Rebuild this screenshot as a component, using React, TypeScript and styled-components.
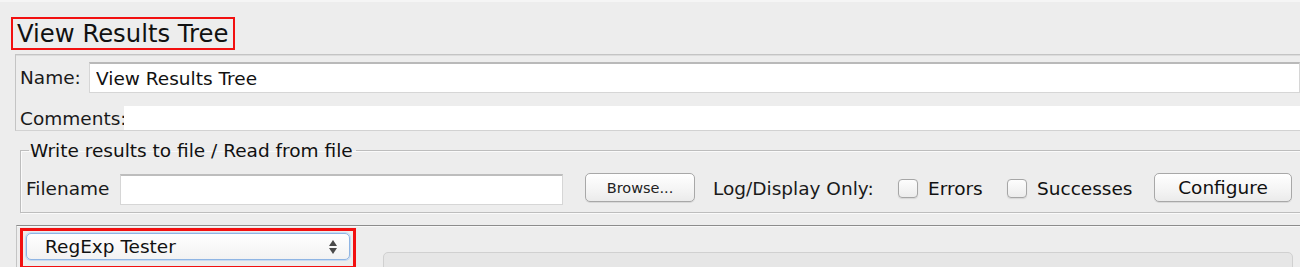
import styled, { createGlobalStyle } from 'styled-components';

const GlobalStyle = createGlobalStyle`
  html, body {
    margin: 0;
    padding: 0;
    background: #ededed;
    overflow: hidden;
  }
  body {
    font-family: 'DejaVu Sans', 'Liberation Sans', sans-serif;
    color: #1a1a1a;
  }
`;

function UpDownArrows() {
  return (
    <svg width="10" height="16" viewBox="0 0 10 16">
      <path d="M5 1 L9 7 L1 7 Z" fill="#4a4a4a" />
      <path d="M5 15 L9 9 L1 9 Z" fill="#4a4a4a" />
    </svg>
  );
}

function Checkbox({ label, width }: { label: string; width: number }) {
  return (
    <StyledCheckLabel style={{ width }}>
      <StyledCheckBox />
      <span>{label}</span>
    </StyledCheckLabel>
  );
}

function App() {
  return (
    <StyledPage>
      <GlobalStyle />
      <StyledTitle>View Results Tree</StyledTitle>

      <StyledNamePanel>
        <StyledRow>
          <StyledLabel $width={69}>Name:</StyledLabel>
          <StyledTextField value="View Results Tree" readOnly />
        </StyledRow>
        <StyledCommentsRow>
          <StyledLabel $width={104}>Comments:</StyledLabel>
          <StyledCommentsArea />
        </StyledCommentsRow>
      </StyledNamePanel>

      <StyledFieldset>
        <StyledLegend>Write results to file / Read from file</StyledLegend>
        <StyledFileRow>
          <StyledLabel $width={94}>Filename</StyledLabel>
          <StyledFileField />
          <StyledSmallButton>Browse...</StyledSmallButton>
          <StyledLabel $width={185}>Log/Display Only:</StyledLabel>
          <Checkbox label="Errors" width={109} />
          <Checkbox label="Successes" width={147} />
          <StyledButton>Configure</StyledButton>
        </StyledFileRow>
      </StyledFieldset>

      <StyledSplitPane>
        <StyledHighlight>
          <StyledCombo>
            <span>RegExp Tester</span>
            <UpDownArrows />
          </StyledCombo>
        </StyledHighlight>
        <StyledResultBox />
      </StyledSplitPane>
    </StyledPage>
  );
}

export default App;

const StyledPage = styled.div`
  width: 1300px;
  height: 267px;
  overflow: hidden;
  border-top: 2px solid #f5f5f5;
  box-sizing: border-box;
  padding-top: 15px;
  display: flex;
  flex-direction: column;
`;

const StyledTitle = styled.div`
  align-self: flex-start;
  margin-left: 11px;
  height: 29px;
  border: 2px solid #f21010;
  padding: 0 5px 0 4px;
  font-size: 24.3px;
  line-height: 30px;
  color: #111;
`;

const StyledNamePanel = styled.div`
  flex: none;
  margin-top: 4px;
  margin-left: 15px;
  border-top: 1px solid #c4c4c4;
  border-left: 1px solid #c4c4c4;
  border-bottom: 1px solid #d2d2d2;
  box-shadow: inset 0 1px 0 #dcdcdc;
  padding: 7px 0 0 4px;
  display: flex;
  flex-direction: column;
  gap: 13px;
`;

const StyledRow = styled.div`
  display: flex;
  align-items: center;
`;

const StyledCommentsRow = styled.div`
  display: flex;
  align-items: center;
  height: 24px;
`;

const StyledLabel = styled.span<{ $width: number }>`
  width: ${(props) => props.$width}px;
  flex: none;
  font-size: 18.5px;
  white-space: nowrap;
`;

const StyledTextField = styled.input`
  flex: 1;
  min-width: 0;
  height: 31px;
  box-sizing: border-box;
  border: 1px solid #d6d6d6;
  border-top: 2px solid #b9b9b9;
  background: #fff;
  padding: 0 6px;
  font-family: inherit;
  font-size: 18.5px;
  color: #111;
  outline: none;
`;

const StyledCommentsArea = styled.div`
  flex: 1;
  align-self: stretch;
  background: #fff;
`;

const StyledFieldset = styled.fieldset`
  flex: none;
  margin: 9px -6px 0 20px;
  padding: 12px 0 8px 5px;
  border: 1px solid #bdbdbd;
  box-shadow: 1px 1px 0 #fafafa, inset 1px 1px 0 #fafafa;
  min-width: 0;
`;

const StyledLegend = styled.legend`
  margin-left: 3px;
  padding: 0 3px 0 1px;
  font-size: 18.5px;
  color: #111;
`;

const StyledFileRow = styled.div`
  display: flex;
  align-items: center;
  height: 31px;
`;

const StyledFileField = styled.div`
  width: 443px;
  height: 31px;
  box-sizing: border-box;
  border: 1px solid #d6d6d6;
  border-top: 2px solid #bdbdbd;
  background: #fff;
  margin-right: 22px;
  margin-top: 2px;
`;

const StyledSmallButton = styled.button`
  width: 110px;
  height: 29px;
  margin-right: 18px;
  margin-top: -2px;
  border: 1px solid #a8a8a8;
  border-radius: 5px;
  background: linear-gradient(#ffffff, #f4f4f4 60%, #ebebeb);
  box-shadow: 0 1px 0 #d9d9d9;
  font-family: inherit;
  font-size: 14.5px;
  color: #222;
  padding: 0;
`;

const StyledCheckLabel = styled.label`
  flex: none;
  display: flex;
  align-items: center;
  gap: 10px;
  font-size: 18.5px;
  color: #111;
`;

const StyledCheckBox = styled.span`
  width: 18px;
  height: 17px;
  flex: none;
  border: 1px solid #a6a6a6;
  border-radius: 4px;
  background: linear-gradient(#fdfdfd, #ececec);
  box-shadow: 0 1px 1px #d6d6d6;
`;

const StyledButton = styled.button`
  width: 138px;
  height: 29px;
  margin-top: -2px;
  border: 1px solid #a8a8a8;
  border-radius: 5px;
  background: linear-gradient(#ffffff, #f4f4f4 60%, #ebebeb);
  box-shadow: 0 1px 0 #d9d9d9;
  font-family: inherit;
  font-size: 18.5px;
  color: #111;
  padding: 0;
`;

const StyledSplitPane = styled.div`
  flex: 1;
  min-height: 0;
  margin-top: 12px;
  margin-left: 16px;
  border-top: 1px solid #8c8c8c;
  border-left: 1px solid #c4c4c4;
  box-shadow: inset 0 1px 0 #f8f8f8;
  display: flex;
  align-items: flex-start;
  padding: 2px 7px 0 3px;
`;

const StyledHighlight = styled.div`
  width: 324px;
  height: 31px;
  border: 3px solid #f21010;
  padding: 2px 3px;
  flex: none;
`;

const StyledCombo = styled.div`
  height: 27px;
  box-sizing: border-box;
  border: 1px solid #8fb5e4;
  border-radius: 5px;
  box-shadow: 0 0 0 1px #c6dbf3;
  background: linear-gradient(#ffffff, #f2f2f2);
  display: flex;
  align-items: center;
  justify-content: space-between;
  padding: 0 11px 0 18px;
  font-size: 18.5px;
  color: #111;
`;

const StyledResultBox = styled.div`
  flex: 1;
  margin-left: 27px;
  margin-top: 24px;
  height: 30px;
  border: 1px solid #d0d0d0;
  border-radius: 5px;
  background: #e6e6e6;
`;
